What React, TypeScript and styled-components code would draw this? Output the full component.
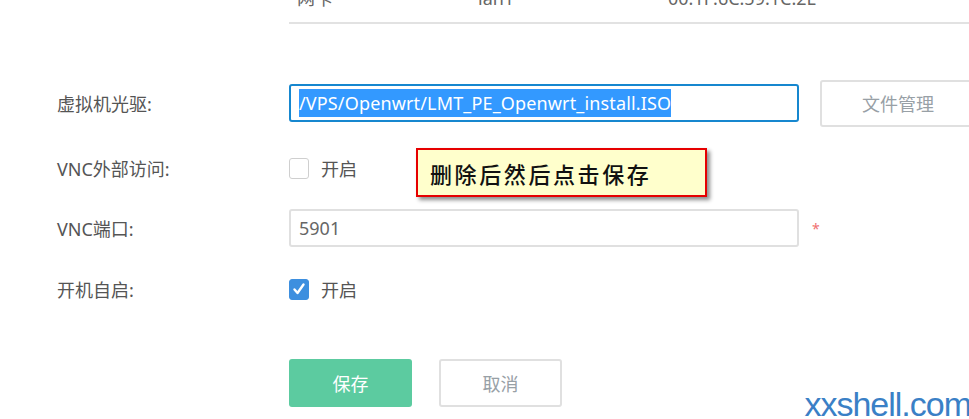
import styled, { createGlobalStyle } from "styled-components";

const GlobalStyle = createGlobalStyle`
  html, body {
    margin: 0;
    padding: 0;
    background: #fff;
  }
  body {
    font-family: "Noto Sans", "Noto Sans CJK SC", sans-serif;
    color: #555;
  }
`;

const Page = styled.div`
  position: relative;
  width: 969px;
  height: 419px;
  overflow: hidden;
  background: #fff;
`;

const TableWrap = styled.div`
  margin-top: -26px;
  margin-left: 289px;
  width: 700px;
`;

const TableRow = styled.div`
  display: grid;
  grid-template-columns: 181px 190px 1fr;
  height: 48px;
  line-height: 48px;
  font-size: 18px;
  color: #666;
  border-bottom: 2px solid #e2e2e2;
`;

const Cell = styled.div`
  padding-left: 8px;
  white-space: nowrap;
`;

const Form = styled.div`
  padding-left: 57px;
`;

const Row = styled.div<{ $top: number; $height?: number }>`
  display: flex;
  align-items: center;
  margin-top: ${(p) => p.$top}px;
  height: ${(p) => p.$height ?? 38}px;
`;

const Label = styled.div`
  width: 232px;
  flex-shrink: 0;
  font-size: 18px;
  color: #555;
`;

const TextInput = styled.div<{ $focused?: boolean }>`
  box-sizing: border-box;
  flex-shrink: 0;
  width: 510px;
  height: 38px;
  display: flex;
  align-items: center;
  padding-left: 8px;
  border: 2px solid ${(p) => (p.$focused ? "#1687cf" : "#e0e0e0")};
  border-radius: 3px;
  font-size: 18px;
  color: #666;
  white-space: nowrap;
`;

const Selected = styled.span`
  background: #3399ff;
  color: #fff;
  line-height: 28px;
  letter-spacing: 0.15px;
`;

const GhostButton = styled.button<{ $width: number; $height: number }>`
  box-sizing: border-box;
  flex-shrink: 0;
  width: ${(p) => p.$width}px;
  height: ${(p) => p.$height}px;
  background: #fff;
  border: 2px solid #e0e0e0;
  border-radius: 3px;
  font-family: inherit;
  font-size: 18px;
  color: #98a0a6;
  padding: 0;
`;

const SideButton = styled(GhostButton)`
  margin-left: 21px;
`;

const PrimaryButton = styled.button`
  box-sizing: border-box;
  width: 123px;
  height: 48px;
  background: #5ccba0;
  border: none;
  border-radius: 3px;
  font-family: inherit;
  font-size: 18px;
  color: #fff;
  padding: 0;
`;

const Buttons = styled.div`
  display: flex;
  gap: 27px;
  margin-top: 51px;
  margin-left: 232px;
`;

const Required = styled.span`
  margin-left: 13px;
  color: #f07070;
  font-size: 14px;
`;

const CheckLabel = styled.label`
  display: flex;
  align-items: center;
  gap: 12px;
  font-size: 18px;
  color: #555;
`;

const Box = styled.span<{ $checked?: boolean }>`
  box-sizing: border-box;
  width: 20px;
  height: 21px;
  border-radius: 3px;
  border: 1px solid ${(p) => (p.$checked ? "#3d8fdf" : "#cfcfcf")};
  background: ${(p) => (p.$checked ? "#3d8fdf" : "#fff")};
  display: flex;
  align-items: center;
  justify-content: center;
`;

const Callout = styled.div`
  position: absolute;
  left: 416px;
  top: 148px;
  box-sizing: border-box;
  width: 291px;
  height: 49px;
  background: #ffffcc;
  border: 2px solid #e60000;
  box-shadow: 3px 3px 4px rgba(0, 0, 0, 0.45);
  display: flex;
  align-items: center;
  padding-left: 12px;
  font-family: "Noto Sans CJK SC", sans-serif;
  font-weight: 500;
  font-size: 22px;
  letter-spacing: 2.6px;
  color: #111;
`;

const Watermark = styled.div`
  position: absolute;
  right: -2px;
  bottom: -5px;
  font-family: "Liberation Sans", Arial, sans-serif;
  font-size: 34px;
  letter-spacing: -1px;
  color: #3a80c6;
`;

const Checkbox = ({ checked, text }: { checked?: boolean; text: string }) => (
  <CheckLabel>
    <Box $checked={checked}>
      {checked && (
        <svg width="14" height="14" viewBox="0 0 14 14">
          <path
            d="M2.5 7.5 L5.5 11 L11.5 2.5"
            fill="none"
            stroke="#fff"
            strokeWidth="2.4"
            strokeLinecap="round"
            strokeLinejoin="round"
          />
        </svg>
      )}
    </Box>
    {text}
  </CheckLabel>
);

export default function App() {
  return (
    <>
      <GlobalStyle />
      <Page>
        <TableWrap>
          <TableRow>
            <Cell>网卡</Cell>
            <Cell>lan1</Cell>
            <Cell>00:1F:6C:59:1C:2E</Cell>
          </TableRow>
        </TableWrap>

        <Form>
          <Row $top={60}>
            <Label>虚拟机光驱:</Label>
            <TextInput $focused>
              <Selected>/VPS/Openwrt/LMT_PE_Openwrt_install.ISO</Selected>
            </TextInput>
            <SideButton $width={156} $height={47}>
              文件管理
            </SideButton>
          </Row>

          <Row $top={27}>
            <Label>VNC外部访问:</Label>
            <Checkbox text="开启" />
          </Row>

          <Row $top={22}>
            <Label>VNC端口:</Label>
            <TextInput>5901</TextInput>
            <Required>*</Required>
          </Row>

          <Row $top={23}>
            <Label>开机自启:</Label>
            <Checkbox checked text="开启" />
          </Row>

          <Buttons>
            <PrimaryButton>保存</PrimaryButton>
            <GhostButton $width={123} $height={48}>
              取消
            </GhostButton>
          </Buttons>
        </Form>

        <Callout>删除后然后点击保存</Callout>
        <Watermark>xxshell.com</Watermark>
      </Page>
    </>
  );
}
